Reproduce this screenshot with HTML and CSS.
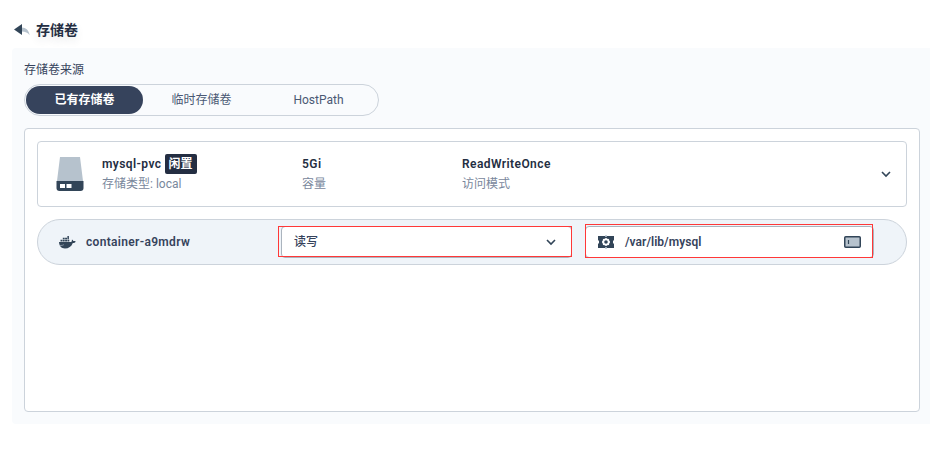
FILE: index.html
```html
<!DOCTYPE html>
<html lang="zh">
<head>
<meta charset="utf-8">
<title>存储卷</title>
<link rel="stylesheet" href="styles.css">
</head>
<body>
<header class="head">
  <svg class="back" width="16" height="12" viewBox="0 0 16 12"><path d="M7 3.500C12 3.300 15 6.200 15.600 11.200C13.800 8.600 11 7.300 7 7.500Z" fill="#b6c2cd"/><path d="M0 5.500L8 0V11Z" fill="#324558"/></svg>
  <h1>存储卷</h1>
</header>
<main class="panel">
  <div class="label">存储卷来源</div>
  <div class="tabs">
    <span class="tab active">已有存储卷</span>
    <span class="tab">临时存储卷</span>
    <span class="tab">HostPath</span>
  </div>
  <section class="box">
    <div class="card">
      <svg class="disk" width="28" height="34" viewBox="0 0 28 34"><path d="M4 0H24L27 24H1Z" fill="#b6c2cd"/><path d="M.5 24H27.500V31Q27.500 34 24.500 34H3.500Q.5 34 .5 31Z" fill="#324558"/><path d="M4 27H9V31H4ZM10.500 27H15.500V31H10.500Z" fill="#fff"/></svg>
      <div class="col name"><div class="title">mysql-pvc<span class="badge">闲置</span></div><div class="sub">存储类型: local</div></div>
      <div class="col size"><div class="title">5Gi</div><div class="sub">容量</div></div>
      <div class="col mode"><div class="title">ReadWriteOnce</div><div class="sub">访问模式</div></div>
      <svg class="chev" width="10" height="7" viewBox="0 0 10 7"><path d="M1 1L5 5L9 1" fill="none" stroke="#324558" stroke-width="1.600"/></svg>
    </div>
    <div class="mount">
      <svg class="docker" width="17" height="13" viewBox="0 0 17 13"><path d="M0 6H12.200C13 5.600 12.700 4.500 13 3.600C13.800 4 14.200 4.500 14.300 5.100C15.300 4.900 16 5 16.700 5.400C16.200 6.500 15.200 6.900 13.800 6.900C12.400 10.500 9.800 12.400 5.900 12.400C2.300 12.400 .3 10.300 0 6Z" fill="#324558"/><path d="M1.500 3.700h1.900v1.800h-1.900zM3.800 3.700h1.900v1.800h-1.900zM6.100 3.700H8v1.800H6.100zM8.400 3.700h1.900v1.800H8.400zM3.800 1.800h1.900v1.500h-1.900zM6.100 1.800H8v1.500H6.100zM8.400 0h1.500v3.300H8.400z" fill="#324558"/><path d="M1 9.500Q3.500 9.600 4.800 8.700" fill="none" stroke="#a9b5c1" stroke-width=".7"/></svg>
      <span class="container">container-a9mdrw</span>
      <div class="field select"><span>读写</span><svg width="10" height="7" viewBox="0 0 10 7"><path d="M1 1L5 5L9 1" fill="none" stroke="#324558" stroke-width="1.600"/></svg><i class="mark"></i></div>
      <div class="field path">
        <svg width="16" height="14" viewBox="0 0 16 14"><path d="M0 1H16V5.500H15V8.500H16V13H0V8.500H1V5.500H0Z" fill="#324558"/><path d="M8 0V2M8 12V14" stroke="#b6c2cd" stroke-width="1.600"/><circle cx="8" cy="7" r="2.700" fill="none" stroke="#fff" stroke-width="1.800"/><path d="M8 3V4M8 10V11M4 7H5M11 7H12M5.200 4.200L6 5M10 9L10.800 9.800M10.800 4.200L10 5M6 9L5.200 9.800" stroke="#fff" stroke-width="1.300"/></svg>
        <span>/var/lib/mysql</span>
        <svg class="input-icon" width="17" height="12" viewBox="0 0 17 12"><rect x=".75" y=".75" width="15.500" height="10.500" rx="1" fill="#b6c2cd" stroke="#324558" stroke-width="1.500"/><path d="M4.500 4V8" stroke="#324558" stroke-width="1.200"/></svg>
        <i class="mark"></i>
      </div>
    </div>
  </section>
</main>
</body>
</html>
```
FILE: styles.css
```css
* { box-sizing: border-box; }
body {
  margin: 0;
  height: 450px;
  padding: 20px 0 0 12px;
  overflow: hidden;
  background: #fff;
  color: #36435c;
  font: 12px/20px Roboto, "Noto Sans CJK SC", sans-serif;
}
svg { display: block; flex: none; }
.head { display: flex; align-items: center; height: 28px; padding: 0 0 8px 2px; }
.head h1 {
  margin: 0 0 0 6px;
  font-size: 14px;
  line-height: 20px;
  font-weight: 600;
  color: #242e42;
  text-shadow: 0 4px 8px rgba(36, 46, 66, .1);
}
.panel { height: 376px; padding: 12px 10px 12px 12px; background: #f9fbfd; border-radius: 4px 0 0 4px; }
.label { height: 24px; line-height: 20px; }
.tabs { display: flex; width: 355px; height: 32px; padding: 1px; border: 1px solid #ccd3db; border-radius: 16px; }
.tab { width: 117px; line-height: 28px; text-align: center; color: #4a5974; border-radius: 14px; }
.active { background: #36435c; color: #fff; font-weight: 600; }
.box { height: 284px; margin-top: 12px; padding: 12px; background: #fff; border: 1px solid #ccd3db; border-radius: 4px; }
.card { display: flex; align-items: center; height: 66px; padding: 0 15px 0 18px; border: 1px solid #ccd3db; border-radius: 4px; }
.title { display: flex; align-items: center; color: #242e42; font-weight: 600; letter-spacing: .42px; }
.sub { color: #79879c; }
.name { width: 200px; margin-left: 18px; }
.size { width: 160px; }
.badge { margin-left: 3px; padding: 0 4px; border-radius: 2px; background: #242e42; color: #fff; letter-spacing: 0; }
.chev { margin-left: auto; }
.mount { display: flex; align-items: center; height: 46px; margin-top: 12px; padding-left: 21px; background: #eff4f9; border: 1px solid #ccd3db; border-radius: 23px; }
.container { width: 195px; margin-left: 10px; color: #36435c; font-weight: 600; letter-spacing: .32px; }
.field { position: relative; display: flex; align-items: center; height: 32px; background: #fff; border: 1px solid #abb4be; border-radius: 4px; color: #36435c; font-weight: 500; }
.select { width: 291px; padding: 0 15px 0 12px; justify-content: space-between; }
.path { width: 289px; margin-left: 13px; padding: 0 12px; }
.path span { margin-left: 11px; font-weight: 600; letter-spacing: .04px; }
.input-icon { margin-left: auto; }
.mark { position: absolute; border: 1px solid #ff3838; pointer-events: none; }
.select .mark { left: -4px; top: -1px; width: 294px; height: 31px; }
.path .mark { left: -1px; top: -3px; width: 288px; height: 34px; }
```
